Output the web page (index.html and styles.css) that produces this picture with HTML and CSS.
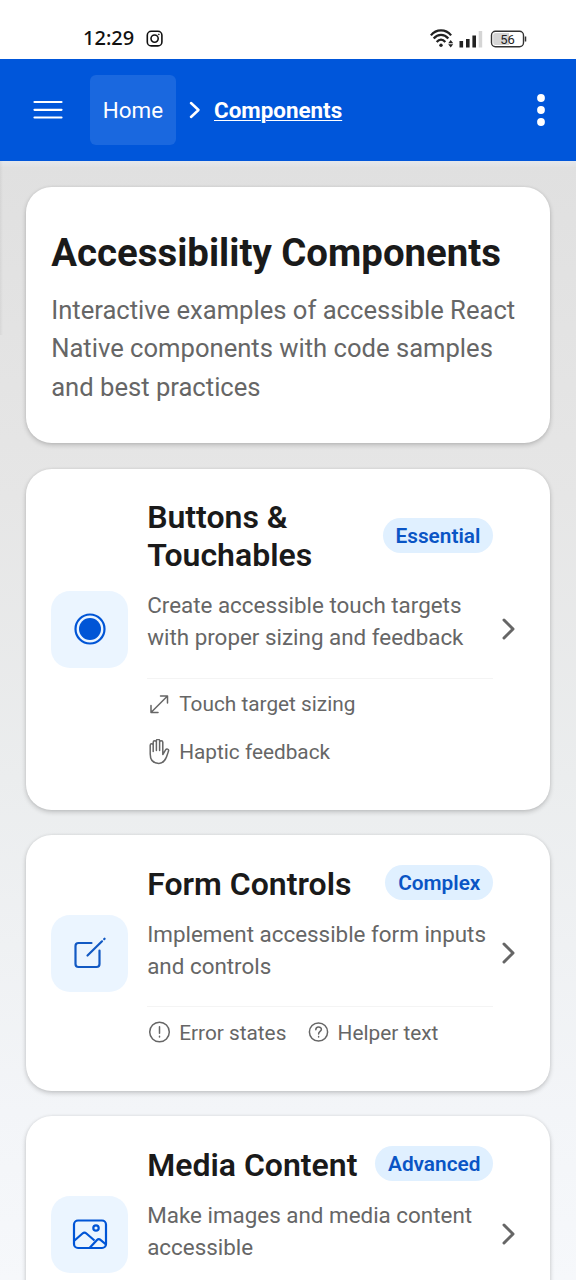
FILE: index.html
```html
<!DOCTYPE html>
<html lang="en">
<head>
<meta charset="utf-8">
<title>Accessibility Components</title>
<link rel="stylesheet" href="styles.css">
</head>
<body>
<div class="status">
  <span class="clock">12:29</span>
  <svg class="insta" width="18" height="18" viewBox="0 0 18 18" fill="none" stroke="#111" stroke-width="1.6"><rect x="1.3" y="1.3" width="14.6" height="14.6" rx="4"/><circle cx="8.6" cy="8.6" r="3.6"/><circle cx="12.8" cy="4.4" r=".5" fill="#111" stroke-width=".6"/></svg>
  <svg class="signals" width="98" height="20" viewBox="0 0 98 20" fill="none">
    <g stroke="#222" stroke-width="2.3"><path d="M.9 6.4C6.3-.3 15.700-.3 21.100 6.400"/><path d="M3.700 9.600C7.900 4.700 14.100 4.700 18.300 9.600"/><path d="M6.700 13C9.300 9.900 12.700 9.900 15.300 13"/></g>
    <circle cx="11" cy="16.200" r="1.700" fill="#222"/>
    <path d="M18.200 14.200 20.700 11l2.500 3.200zM18.200 15.300l2.500 3.200 2.500-3.200z" fill="#222"/>
    <path d="M29.500 12h3.600v6.500h-3.600zM36 10h3.600v8.500H36zM42.400 6.500H46v12h-3.600z" fill="#222"/><path d="M48.700 2h3.500v16.500h-3.500z" fill="#d5d5d5"/>
    <rect x="61.500" y="2.300" width="32" height="15.400" rx="4" stroke="#333" stroke-width="1.400"/>
    <path d="M65.500 4H79v12H65.500Q63.200 16 63.200 13.700V6.300Q63.200 4 65.500 4Z" fill="#d5d5d5"/>
    <path d="M95.500 7.500v5" stroke="#333" stroke-width="1.500"/>
    <text x="77.500" y="14.700" text-anchor="middle" class="battery">56</text>
  </svg>
</div>
<header class="bar">
  <svg class="menu" width="30" height="20" viewBox="0 0 30 20" stroke="#fff" stroke-width="2.200" stroke-linecap="round"><path d="M1.500 2h27M1.500 9.800h27M1.500 17.500h27"/></svg>
  <a class="home">Home</a>
  <svg class="crumb" width="12" height="18" viewBox="0 0 12 18" fill="none" stroke="#fff" stroke-width="2.500" stroke-linecap="round" stroke-linejoin="round"><path d="M2 2l7.500 7L2 16"/></svg>
  <a class="current">Components</a>
  <svg class="more" width="10" height="34" viewBox="0 0 10 34" fill="#fff"><circle cx="5" cy="5" r="3.900"/><circle cx="5" cy="17" r="3.900"/><circle cx="5" cy="29" r="3.900"/></svg>
</header>
<main class="content">
  <section class="card hero">
    <h1>Accessibility Components</h1>
    <p>Interactive examples of accessible React Native components with code samples and best practices</p>
  </section>

  <section class="card item">
    <div class="tile"><svg width="38" height="38" viewBox="0 0 38 38"><circle cx="19" cy="19" r="14.500" fill="none" stroke="#0055d6" stroke-width="2.200"/><circle cx="19" cy="19" r="11" fill="#0055d6"/></svg></div>
    <div class="body">
      <div class="head"><h2>Buttons &amp;<br>Touchables</h2><span class="badge">Essential</span></div>
      <p>Create accessible touch targets with proper sizing and feedback</p>
      <ul>
        <li><svg width="24" height="24" viewBox="0 0 24 24" class="line"><path d="M4 19.500 20.500 3M13.500 3h7v7M4 12.500v7h7"/></svg>Touch target sizing</li>
        <li><svg width="24" height="26" viewBox="0 0 24 26" class="line"><path d="M3.200 15V6.300a1.500 1.500 0 0 1 3 0V12.500M6.200 12V3.300a1.600 1.600 0 0 1 3.200 0V11.500M9.400 11.500V1.900a1.600 1.600 0 0 1 3.200 0V11.500M12.600 11.500V3.300a1.600 1.600 0 0 1 3.200 0v12.200l2.800-4.600c1-1.600 3.500-.8 2.900 1.100-1.300 4.200-2.900 12.400-9.600 12.400-6.200 0-8.700-4.200-8.700-9.400"/></svg>Haptic feedback</li>
      </ul>
    </div>
    <svg class="go" width="16" height="24" viewBox="0 0 16 24"><path d="M3 3l9 9L3 21"/></svg>
  </section>

  <section class="card item">
    <div class="tile"><svg width="38" height="38" viewBox="0 0 38 38" fill="none" stroke="#1259c3" stroke-width="2.200" stroke-linecap="round" stroke-linejoin="round"><path d="M20.500 9H7.500A3 3 0 0 0 4.500 12v18A3 3 0 0 0 7.500 33h18a3 3 0 0 0 3-3V16.500M16.500 21.500 31 7.300M33.200 5.100l.4-.4"/></svg></div>
    <div class="body">
      <div class="head"><h2>Form Controls</h2><span class="badge">Complex</span></div>
      <p>Implement accessible form inputs and controls</p>
      <ul>
        <li><svg width="24" height="24" viewBox="0 0 24 24" class="line"><circle cx="12.500" cy="11" r="9.800"/><path d="M12.500 5.800v6.500M12.500 15.300v.6"/></svg>Error states</li>
        <li><svg width="24" height="24" viewBox="0 0 24 24" class="line"><circle cx="12.500" cy="11" r="9.100"/><path d="M9.800 8.700c0-3.700 5.600-3.500 5.600-.4 0 2.200-2.800 2.100-2.800 4.600M12.600 15.600v.5"/></svg>Helper text</li>
      </ul>
    </div>
    <svg class="go" width="16" height="24" viewBox="0 0 16 24"><path d="M3 3l9 9L3 21"/></svg>
  </section>

  <section class="card item">
    <div class="tile"><svg width="38" height="38" viewBox="0 0 38 38" fill="none" stroke="#0055d6" stroke-width="2.200" stroke-linejoin="round"><rect x="3" y="5.500" width="32" height="27.500" rx="4"/><circle cx="25" cy="13" r="2.700"/><path d="M3.500 25.500 11.500 18.500c1.400-1.200 2.500-1.200 3.900 0L23.500 25.500M18.500 33 26 25c1.200-1.300 2.300-1.200 3.500-.1L35 29.500"/></svg></div>
    <div class="body">
      <div class="head"><h2>Media Content</h2><span class="badge">Advanced</span></div>
      <p>Make images and media content accessible</p>
      <ul>
        <li></li>
      </ul>
    </div>
    <svg class="go" width="16" height="24" viewBox="0 0 16 24"><path d="M3 3l9 9L3 21"/></svg>
  </section>
</main>
</body>
</html>
```
FILE: styles.css
```css
* { box-sizing: border-box; }
body {
  margin: 0;
  height: 1280px;
  overflow: hidden;
  font-family: Roboto, sans-serif;
  color: #1a1a1a;
  background: #fff;
}
h1, h2, p, ul { margin: 0; padding: 0; }
svg { display: block; flex: none; }
.status { height: 59px; display: flex; align-items: center; padding: 18px 48px 0 83px; }
.clock { font: 500 20px/24px "Noto Sans", sans-serif; width: 63px; color: #111; padding-bottom: 1px; }
.signals { margin-left: auto; }
.battery { font: 13px Roboto, sans-serif; fill: #222; }
.bar { height: 102px; background: #0056da; color: #fff; display: flex; align-items: center; padding-left: 33px; padding-right: 30px; font-size: 22.400px; }
.home { width: 86px; height: 70px; margin-left: 27px; line-height: 71px; text-align: center; background: #1a68df; border-radius: 6px; }
.crumb { margin-left: 13px; }
.current { margin-left: 13px; font-weight: 700; text-decoration: underline; text-decoration-thickness: 1px; text-underline-offset: 2px; line-height: 28px; }
.more { margin-left: auto; }
.content {
  height: 1119px;
  overflow: hidden;
  padding: 26px 25.600px 0;
  display: flex;
  flex-direction: column;
  gap: 25.600px;
  background:
    linear-gradient(90deg, rgba(0, 0, 0, .05), transparent) 0 0 / 3px 174px no-repeat,
    linear-gradient(rgba(228, 232, 238, .9), rgba(228, 228, 228, .3)) 0 0 / 100% 6px no-repeat,
    linear-gradient(#e0e0e0 0%, #e6e6e6 30%, #ebedee 55%, #f3f5f8 85%, #f6f8fb 100%);
}
.card { flex: none; background: #fff; border-radius: 25.600px; box-shadow: 0 2px 5px rgba(0, 0, 0, .2), 0 0 3px rgba(0, 0, 0, .06); }
.hero { height: 256px; padding: 40px 25.600px 0; }
.hero h1 { font-size: 38.400px; line-height: 51px; font-weight: 700; white-space: nowrap; }
.hero p { margin-top: 13px; margin-right: -4px; font-size: 25.600px; line-height: 38.400px; color: #666; }
.item { display: flex; align-items: center; padding: 25.600px 25.600px 44.800px; }
.tile { flex: none; width: 77px; height: 77px; border-radius: 19px; background: #ebf5ff; display: grid; place-items: center; }
.body { width: 346px; margin-left: 19px; padding-top: 4px; flex: none; }
.head { display: flex; align-items: center; justify-content: space-between; }
.head h2 { font-size: 32px; line-height: 38px; font-weight: 600; white-space: nowrap; }
.badge { height: 35px; line-height: 36px; margin-bottom: 2px; padding: 0 12.800px; border-radius: 18px; background: #e0f0ff; color: #0a55c5; font-size: 20.800px; font-weight: 600; }
.body p { margin-top: 14.800px; font-size: 22.400px; line-height: 32px; color: #666; white-space: normal; }
.body ul { list-style: none; margin-top: 24.600px; padding-top: 13.700px; border-top: 1.600px solid #f4f4f4; display: flex; flex-wrap: wrap; gap: 22.500px 19.200px; color: #666; font-size: 20.800px; line-height: 25px; }
.body li { display: flex; align-items: center; gap: 8px; height: 25px; }
.line { fill: none; stroke: #666; stroke-width: 1.500; stroke-linecap: round; stroke-linejoin: round; }
.go { margin-left: 8px; fill: none; stroke: #666; stroke-width: 3; stroke-linecap: round; stroke-linejoin: round; }
```
